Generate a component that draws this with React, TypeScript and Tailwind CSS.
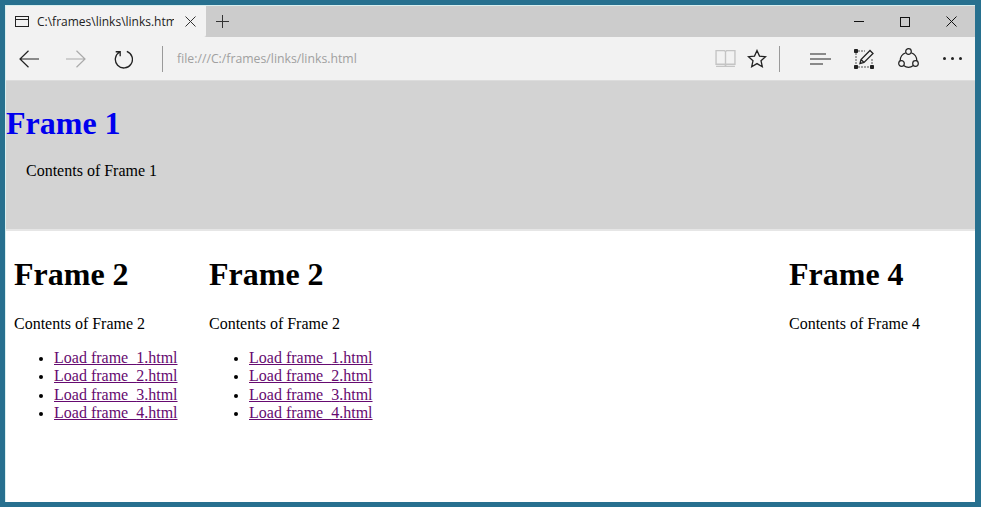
import React from 'react'

const serif = 'font-["Liberation_Serif",serif]'

function FrameLinks({ title }: { title: string }) {
    return (
        <div className="pl-2 pt-[25px]">
            <h1 className="text-[32px] leading-[37px] font-bold text-black">{title}</h1>
            <p className="mt-[22px] text-base leading-[18px] text-black">Contents of {title}</p>
            <ul className="mt-[16px] pl-10 list-disc text-base leading-[18.4px] marker:text-[13px]">
                {['1', '2', '3', '4'].map((n) => (
                    <li key={n}>
                        <a className="text-[#660a70] underline whitespace-nowrap">Load frame_{n}.html</a>
                    </li>
                ))}
            </ul>
        </div>
    )
}

export default function App() {
    return (
        <div className="w-[981px] h-[507px] bg-[#27708f] pt-[5px] pl-[5px] overflow-hidden">
            <div className="w-[970px] h-[497px] bg-white flex flex-col border-t border-l border-[#d8efef]">
                {/* tab strip */}
                <div className="h-[31px] bg-[#cccccc] flex items-center shrink-0">
                    <div className="w-[200px] h-full bg-[#f2f2f2] flex items-center pl-[9px] rounded-br-[2px]">
                        <svg width="15" height="12" viewBox="0 0 15 12" fill="none" stroke="#222" strokeWidth="1">
                            <rect x="0.5" y="0.5" width="13" height="10" />
                            <path d="M1 3.5h12" />
                        </svg>
                        <span className='w-[137px] ml-[7px] overflow-hidden whitespace-nowrap text-[12px] leading-4 text-[#222] font-["Open_Sans",sans-serif]'>
                            C:\frames\links\links.html
                        </span>
                        <svg className="ml-[11px]" width="11" height="11" viewBox="0 0 11 11" stroke="#333" strokeWidth="1">
                            <path d="M.5.5l10 10M10.5.5l-10 10" />
                        </svg>
                    </div>
                    <svg className="ml-[10px]" width="13" height="13" viewBox="0 0 13 13" stroke="#333" strokeWidth="1">
                        <path d="M6.5 0v13M0 6.5h13" />
                    </svg>
                    <div className="ml-auto flex items-center h-full pr-px">
                        <div className="w-[46px] flex justify-center">
                            <div className="w-[10px] h-px bg-[#111]" />
                        </div>
                        <div className="w-[46px] flex justify-center">
                            <div className="w-[10px] h-[10px] border border-[#111]" />
                        </div>
                        <div className="w-[46px] flex justify-center">
                            <svg width="11" height="11" viewBox="0 0 11 11" stroke="#111" strokeWidth="1">
                                <path d="M.5.5l10 10M10.5.5l-10 10" />
                            </svg>
                        </div>
                    </div>
                </div>

                {/* toolbar */}
                <div className="h-[44px] bg-[#f2f2f2] border-b border-[#dcdcdc] flex items-center shrink-0">
                    <svg className="ml-[13px]" width="20" height="18" viewBox="0 0 20 18" fill="none" stroke="#222" strokeWidth="1.2">
                        <path d="M20 9H1M9.5.8 1 9l8.5 8.2" />
                    </svg>
                    <svg className="ml-[27px]" width="20" height="18" viewBox="0 0 20 18" fill="none" stroke="#aaa" strokeWidth="1.2">
                        <path d="M0 9h19M10.5.8 19 9l-8.5 8.2" />
                    </svg>
                    <svg className="ml-[28px]" width="19" height="20" viewBox="0 0 20 20" fill="none" stroke="#222" strokeWidth="1.4">
                        <path d="M6 2.6A9 9 0 1 0 13.5 2M6.5 7V2.4H1.8" />
                    </svg>
                    <div className="ml-[29px] w-px h-[26px] bg-[#9a9a9a]" />
                    <span className='w-[180px] ml-[14px] pt-px whitespace-nowrap text-[12.25px] text-[#a0a0a0] font-["Open_Sans",sans-serif]'>file:///C:/frames/links/links.html</span>
                    <svg className="ml-[358px]" width="21" height="19" viewBox="0 0 20 18" fill="none" stroke="#c4c4c4" strokeWidth="1.3">
                        <path d="M1 1.5h8l1 1 1-1h8v13h-8l-1 1-1-1H1zM10 2.5v12M1 16.5h18" />
                    </svg>
                    <svg className="ml-[11px]" width="20" height="19" viewBox="0 0 20 19" fill="none" stroke="#222" strokeWidth="1.3">
                        <path d="M10 1.5l2.5 5.6 6 .6-4.5 4 1.3 6L10 14.6l-5.3 3.1 1.3-6-4.5-4 6-.6z" />
                    </svg>
                    <div className="ml-[12px] w-px h-[26px] bg-[#9a9a9a]" />
                    <svg className="ml-[30px]" width="21" height="14" viewBox="0 0 21 14" stroke="#222" strokeWidth="1.1">
                        <path d="M0 2h16M0 7h21M0 12h13" />
                    </svg>
                    <svg className="ml-[23px]" width="20" height="20" viewBox="0 0 20 20" fill="none" stroke="#222" strokeWidth="1">
                        <path d="M2 4v12M4 2h7M4 18h12M18 10v6" strokeDasharray="2 1" stroke="#555" />
                        <path d="M.5.5h3v3h-3zM.5 16.5h3v3h-3zM16.5 16.5h3v3h-3z" fill="#222" />
                        <path d="M6 14.5l1-4 9-9 3 3-9 9zM7 10.5l3 3" strokeWidth="1.3" />
                    </svg>
                    <svg className="ml-[24px]" width="21" height="21" viewBox="0 0 21 21" fill="none" stroke="#222" strokeWidth="1.2">
                        <circle cx="10.5" cy="3.5" r="2.8" />
                        <circle cx="3.5" cy="15.5" r="2.8" />
                        <circle cx="17.5" cy="15.5" r="2.8" />
                        <path d="M7.8 4.8A8.5 8.5 0 0 0 2.2 12.9M13.2 4.8a8.5 8.5 0 0 1 5.6 8.1M5.6 17.6a8.5 8.5 0 0 0 9.8 0" />
                    </svg>
                    <div className="ml-[24px] flex gap-[5px]">
                        <div className="w-[3px] h-[3px] rounded-full bg-[#222]" />
                        <div className="w-[3px] h-[3px] rounded-full bg-[#222]" />
                        <div className="w-[3px] h-[3px] rounded-full bg-[#222]" />
                    </div>
                </div>

                {/* top frame */}
                <div className={`${serif} h-[150px] bg-[#d3d3d3] shrink-0 pt-[22px] border-b-2 border-[#e6e6e6]`}>
                    <a className="block text-[32px] leading-[40px] font-bold text-[#0000ee]">Frame 1</a>
                    <p className="mt-[19px] ml-5 text-base leading-[18px] text-black">Contents of Frame 1</p>
                </div>

                {/* bottom frames */}
                <div className={`${serif} flex-1 grid grid-cols-[195px_195px_385px_1fr]`}>
                    <FrameLinks title="Frame 2" />
                    <FrameLinks title="Frame 2" />
                    <div />
                    <div className="pl-2 pt-[25px]">
                        <h1 className="text-[32px] leading-[37px] font-bold text-black">Frame 4</h1>
                        <p className="mt-[22px] text-base leading-[18px] text-black">Contents of Frame 4</p>
                    </div>
                </div>
            </div>
        </div>
    )
}
